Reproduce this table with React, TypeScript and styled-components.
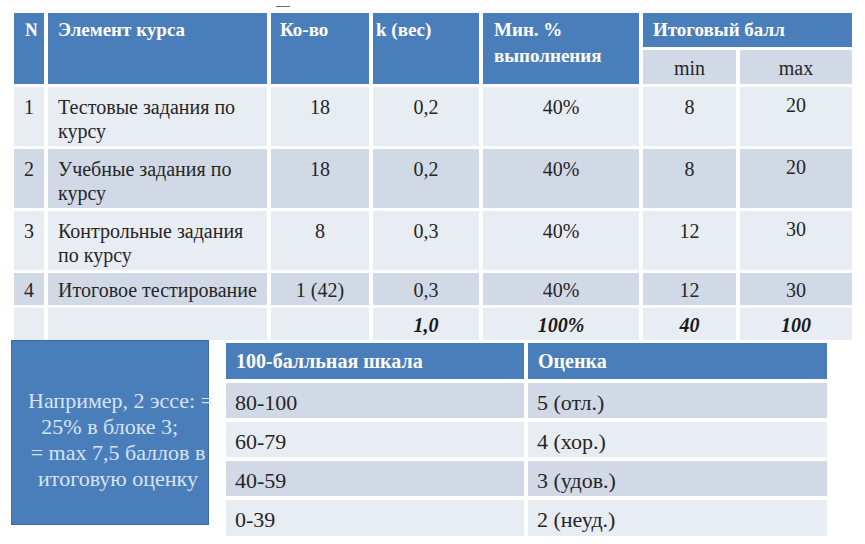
import React from "react";
import styled, { createGlobalStyle, css } from "styled-components";

const Global = createGlobalStyle`
  html, body { margin: 0; padding: 0; background: #ffffff; }
`;

const BLUE = "#4a7ebb";
const LIGHT = "#e8ecf3";
const DARK = "#d1d9e7";

type Tone = "head" | "sub" | "light" | "dark";

const toneBg: Record<Tone, string> = {
  head: BLUE,
  sub: DARK,
  light: LIGHT,
  dark: DARK,
};

const Page = styled.div`
  width: 865px;
  height: 544px;
  overflow: hidden;
  padding-top: 6px;
  box-sizing: border-box;
  font-family: "Liberation Serif", serif;
`;

const TopMark = styled.div`
  margin-left: 276px;
  width: 14px;
  height: 1px;
  background: #6b6b6b;
`;

const MainGrid = styled.div`
  margin: 6px 0 0 14px;
  display: grid;
  grid-template-columns: 30px 219px 98px 106px 156px 93px 112px;
  grid-template-rows: 34px 34px 59px 59px 59px 32px 32px;
  gap: 3px 4px;
`;

const Cell = styled.div<{
  $tone: Tone;
  $align?: "left" | "center";
  $padTop?: number;
  $padLeft?: number;
  $rows?: number;
  $cols?: number;
  $total?: boolean;
}>`
  font-family: "Liberation Serif", serif;
  background: ${(p) => toneBg[p.$tone]};
  box-sizing: border-box;
  overflow: hidden;
  white-space: nowrap;
  text-align: ${(p) => p.$align ?? "left"};
  padding-top: ${(p) => p.$padTop ?? 8}px;
  padding-left: ${(p) => p.$padLeft ?? (p.$align === "center" ? 0 : 10)}px;
  ${(p) => (p.$rows ? `grid-row: span ${p.$rows};` : "")}
  ${(p) => (p.$cols ? `grid-column: span ${p.$cols};` : "")}
  ${(p) =>
    p.$tone === "head"
      ? css`
          color: #ffffff;
          font-weight: bold;
          font-size: 19px;
          line-height: 26px;
        `
      : css`
          color: #262626;
          font-size: 20px;
          line-height: 24px;
        `}
  ${(p) =>
    p.$total
      ? css`
          font-weight: bold;
          font-style: italic;
          color: #1a1a1a;
        `
      : ""}
`;

const NumClip = styled.span`
  display: inline-block;
  width: 12px;
  overflow: hidden;
  vertical-align: top;
`;

const Bottom = styled.div`
  display: flex;
  align-items: flex-start;
  margin-left: 11px;
  gap: 17px;
`;

const NoteBox = styled.div`
  font-family: "Liberation Serif", serif;
  width: 198px;
  height: 185px;
  box-sizing: border-box;
  background: ${BLUE};
  border: 1px solid #3d6ca6;
  display: flex;
  align-items: center;
  justify-content: center;
  padding: 14px 0 0 16px;
  color: #d8e3f1;
  font-size: 22px;
  line-height: 26px;
  text-align: center;
  white-space: nowrap;
`;

const NoteText = styled.div`
  width: 100%;
`;

const ScaleGrid = styled.div`
  margin-top: 3px;
  display: grid;
  grid-template-columns: 298px 299px;
  grid-template-rows: 36px 35px 35px 35px 36px;
  gap: 4px 4px;
`;

const ScaleCell = styled.div<{ $tone: Tone }>`
  font-family: "Liberation Serif", serif;
  background: ${(p) => toneBg[p.$tone]};
  box-sizing: border-box;
  white-space: nowrap;
  ${(p) =>
    p.$tone === "head"
      ? css`
          color: #ffffff;
          font-weight: bold;
          font-size: 20px;
          line-height: 36px;
          padding-left: 10px;
        `
      : css`
          color: #262626;
          font-size: 22px;
          line-height: 31px;
          padding: 4px 0 0 9px;
        `}
`;

type Row = {
  n: string;
  name: string[];
  qty: string;
  k: string;
  pct: string;
  min: string;
  max: string;
  tone: Tone;
  tall: boolean;
};

const rows: Row[] = [
  { n: "1", name: ["Тестовые задания по", "курсу"], qty: "18", k: "0,2", pct: "40%", min: "8", max: "20", tone: "light", tall: true },
  { n: "2", name: ["Учебные задания по", "курсу"], qty: "18", k: "0,2", pct: "40%", min: "8", max: "20", tone: "dark", tall: true },
  { n: "3", name: ["Контрольные задания", "по курсу"], qty: "8", k: "0,3", pct: "40%", min: "12", max: "30", tone: "light", tall: true },
  { n: "4", name: ["Итоговое тестирование"], qty: "1 (42)", k: "0,3", pct: "40%", min: "12", max: "30", tone: "dark", tall: false },
];

const scale: { range: string; grade: string; tone: Tone }[] = [
  { range: "80-100", grade: "5 (отл.)", tone: "dark" },
  { range: "60-79", grade: "4 (хор.)", tone: "light" },
  { range: "40-59", grade: "3 (удов.)", tone: "dark" },
  { range: "0-39", grade: "2 (неуд.)", tone: "light" },
];

export default function App() {
  return (
    <>
      <Global />
      <Page>
        <TopMark />
        <MainGrid>
          <Cell $tone="head" $rows={2} $padTop={4} $padLeft={11}>
            <NumClip>№</NumClip>
          </Cell>
          <Cell $tone="head" $rows={2} $padTop={4}>Элемент курса</Cell>
          <Cell $tone="head" $rows={2} $padTop={4} $padLeft={9}>Ко-во</Cell>
          <Cell $tone="head" $rows={2} $padTop={4} $padLeft={3}>k (вес)</Cell>
          <Cell $tone="head" $rows={2} $padTop={4} $padLeft={11}>
            Мин. %
            <br />
            выполнения
          </Cell>
          <Cell $tone="head" $cols={2} $padTop={4}>Итоговый балл</Cell>
          <Cell $tone="sub" $align="center" $padTop={6}>min</Cell>
          <Cell $tone="sub" $align="center" $padTop={6}>max</Cell>

          {rows.map((r) => {
            const pt = r.tall ? 8 : 5;
            return (
              <React.Fragment key={r.n}>
                <Cell $tone={r.tone} $align="center" $padTop={pt}>{r.n}</Cell>
                <Cell $tone={r.tone} $padTop={pt}>
                  {r.name.map((line, i) => (
                    <React.Fragment key={i}>
                      {i > 0 && <br />}
                      {line}
                    </React.Fragment>
                  ))}
                </Cell>
                <Cell $tone={r.tone} $align="center" $padTop={pt}>{r.qty}</Cell>
                <Cell $tone={r.tone} $align="center" $padTop={pt}>{r.k}</Cell>
                <Cell $tone={r.tone} $align="center" $padTop={pt}>{r.pct}</Cell>
                <Cell $tone={r.tone} $align="center" $padTop={pt}>{r.min}</Cell>
                <Cell $tone={r.tone} $align="center" $padTop={r.tall ? 6 : pt}>{r.max}</Cell>
              </React.Fragment>
            );
          })}

          <Cell $tone="light" $padTop={5} />
          <Cell $tone="light" $padTop={5} />
          <Cell $tone="light" $padTop={5} />
          <Cell $tone="light" $align="center" $padTop={5} $total>1,0</Cell>
          <Cell $tone="light" $align="center" $padTop={5} $total>100%</Cell>
          <Cell $tone="light" $align="center" $padTop={5} $total>40</Cell>
          <Cell $tone="light" $align="center" $padTop={5} $total>100</Cell>
        </MainGrid>

        <Bottom>
          <NoteBox>
            <NoteText>
              Например, 2 эссе: =
              <br />
              25% в блоке 3;{"\u00a0\u00a0\u00a0"}
              <br />
              = max 7,5 баллов в
              <br />
              итоговую оценку
            </NoteText>
          </NoteBox>
          <ScaleGrid>
            <ScaleCell $tone="head">100-балльная шкала</ScaleCell>
            <ScaleCell $tone="head">Оценка</ScaleCell>
            {scale.map((s) => (
              <React.Fragment key={s.range}>
                <ScaleCell $tone={s.tone}>{s.range}</ScaleCell>
                <ScaleCell $tone={s.tone}>{s.grade}</ScaleCell>
              </React.Fragment>
            ))}
          </ScaleGrid>
        </Bottom>
      </Page>
    </>
  );
}
